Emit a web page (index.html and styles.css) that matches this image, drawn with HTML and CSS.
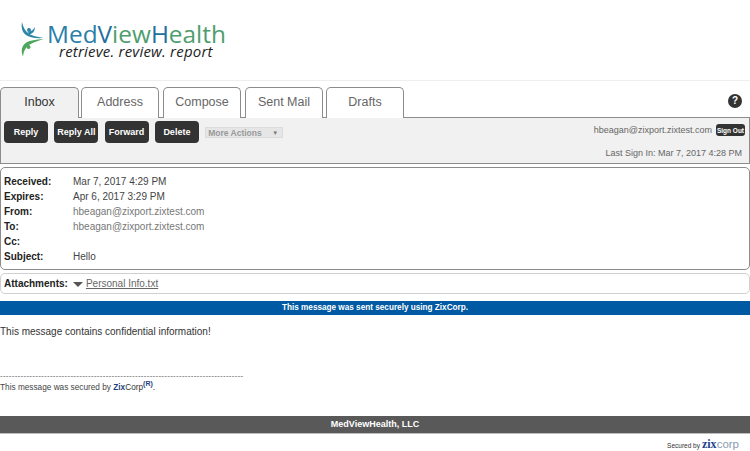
FILE: index.html
```html
<!DOCTYPE html>
<html lang="en">
<head>
<meta charset="utf-8">
<title>MedViewHealth</title>
<link rel="stylesheet" href="styles.css">
</head>
<body>
<header class="brand">
  <div class="logo">
    <svg class="logo-mark" width="26" height="36" viewBox="0 0 26 36" aria-hidden="true">
      <path d="M2 1C1 6 2 11 6 14C9 16.500 15 17.500 24 17C16 15.500 11 14.500 8 12C5 9.500 3 6 2 1Z" fill="#2b86a8"/>
      <circle cx="9" cy="9" r="2" fill="#2b86a8"/>
      <path d="M8 11C11 10.500 14 8.500 15 6C15 9.500 13 13 9 13.500Z" fill="#2b86a8"/>
      <path d="M24 18C15 18.500 8 19.500 4.500 23C1.500 26 1 31 3 35.500C3.500 30 5.500 26.500 9 24C12 22 17 20 24 18Z" fill="#4ea65c"/>
      <circle cx="8.500" cy="26" r="2" fill="#4ea65c"/>
    </svg>
    <div class="logo-text">
      <div class="logo-name"><span class="blue">Med</span><span class="deep">V</span><span class="green">iew</span><span class="deep">H</span><span class="green">ealth</span></div>
      <div class="logo-tag">retrieve. review. report</div>
    </div>
  </div>
</header>

<nav class="tabs">
  <a class="tab tab-active">Inbox</a>
  <a class="tab tab-address">Address</a>
  <a class="tab tab-compose">Compose</a>
  <a class="tab tab-sent">Sent Mail</a>
  <a class="tab tab-drafts">Drafts</a>
  <span class="help">?</span>
</nav>

<section class="toolbar">
  <div class="actions">
    <button class="btn">Reply</button>
    <button class="btn">Reply All</button>
    <button class="btn">Forward</button>
    <button class="btn">Delete</button>
    <div class="more"><span>More Actions</span><span class="more-arrow">▼</span></div>
  </div>
  <div class="account">
    <div class="account-user"><span>hbeagan@zixport.zixtest.com</span><button class="signout">Sign Out</button></div>
    <div class="account-last">Last Sign In: Mar 7, 2017 4:28 PM</div>
  </div>
</section>

<section class="details">
  <div class="row"><span class="label">Received:</span><span class="value">Mar 7, 2017 4:29 PM</span></div>
  <div class="row"><span class="label">Expires:</span><span class="value">Apr 6, 2017 3:29 PM</span></div>
  <div class="row"><span class="label">From:</span><span class="value muted">hbeagan@zixport.zixtest.com</span></div>
  <div class="row"><span class="label">To:</span><span class="value muted">hbeagan@zixport.zixtest.com</span></div>
  <div class="row"><span class="label">Cc:</span><span class="value"></span></div>
  <div class="row"><span class="label">Subject:</span><span class="value">Hello</span></div>
</section>

<section class="attachments">
  <span class="label-att">Attachments:</span>
  <span class="att-arrow"></span>
  <a class="att-link">Personal Info.txt</a>
</section>

<div class="secure-bar">This message was sent securely using ZixCorp.</div>

<main class="message">
  <p class="message-text">This message contains confidential information!</p>
  <div class="rule">-----------------------------------------------------------------------------------</div>
  <p class="secured-note">This message was secured by <b class="zix">Zix</b><span class="corp">Corp</span><sup class="reg">(R)</sup>.</p>
</main>

<footer class="foot">MedViewHealth, LLC</footer>
<div class="secured-by"><span class="sb-text">Secured by</span><span class="sb-zix">zix</span><span class="sb-corp">corp</span></div>
</body>
</html>
```

FILE: styles.css
```css
* { box-sizing: border-box; }
html, body { margin: 0; padding: 0; }
body {
  width: 750px;
  height: 451px;
  overflow: hidden;
  background: #fff;
  font-family: "Liberation Sans", Arial, sans-serif;
  color: #333;
}

/* Brand */
.brand {
  height: 81px;
  padding: 20px 0 0 20px;
  border-bottom: 1px solid #eeeeee;
}
.logo { display: flex; align-items: flex-start; }
.logo-mark { margin-top: 1px; flex: none; }
.logo-text { margin-left: 1px; padding-top: 2px; }
.logo-name {
  font-family: "Open Sans", sans-serif;
  font-size: 24.400px;
  line-height: 24px;
  white-space: nowrap;
}
.blue { color: #2a7fa8; }
.deep { color: #1f6f9f; }
.green { color: #4f9d6e; }
.logo-tag {
  margin: -2px 0 0 12px;
  font-family: "Open Sans", sans-serif;
  font-style: italic;
  font-size: 15px;
  line-height: 14px;
  color: #222;
  letter-spacing: 0.2px;
  white-space: nowrap;
}

/* Tabs */
.tabs {
  display: flex;
  align-items: flex-end;
  height: 37px;
  padding-top: 6px;
  position: relative;
  z-index: 1;
  margin-bottom: -1px;
}
.tab {
  height: 31px;
  width: 78px;
  flex: none;
  border: 1px solid #8c8c8c;
  border-bottom: 0;
  border-radius: 5px 5px 0 0;
  background: #fff;
  color: #666;
  font-size: 12.500px;
  line-height: 29px;
  text-align: center;
}
.tab-active {
  width: 79px;
  background: #f1f1f1;
  color: #333;
  margin-right: 2px;
}
.tab-address { margin-right: 4px; }
.tab-compose { margin-right: 4px; }
.tab-sent { margin-right: 3px; }
.help {
  width: 14px;
  height: 14px;
  margin: 0 8px 10px auto;
  border-radius: 50%;
  background: #333;
  color: #fff;
  font-size: 10px;
  font-weight: bold;
  line-height: 14px;
  text-align: center;
  align-self: flex-end;
}

/* Toolbar */
.toolbar {
  height: 47px;
  display: flex;
  justify-content: space-between;
  background: #f1f1f1;
  border: 1px solid #8c8c8c;
}
.actions {
  display: flex;
  align-items: flex-start;
  padding: 3px 0 0 3px;
}
.btn {
  width: 44px;
  height: 22px;
  margin-right: 6.300px;
  padding: 0;
  border: 0;
  border-radius: 4px;
  background: #333;
  color: #fff;
  font-family: inherit;
  font-size: 9px;
  font-weight: bold;
  white-space: nowrap;
}
.more {
  display: flex;
  justify-content: space-between;
  align-items: center;
  width: 78px;
  height: 11px;
  margin-top: 6px;
  padding: 0 4px 0 2px;
  background: #e6e6e6;
  border: 1px solid #dcdcdc;
  color: #999;
  font-size: 8.500px;
  font-weight: bold;
}
.more-arrow { font-size: 6px; color: #777; }
.account {
  text-align: right;
  font-size: 9px;
  color: #666;
}
.account-user {
  display: flex;
  align-items: center;
  justify-content: flex-end;
  gap: 4px;
  height: 12px;
  margin: 6px 4px 0 0;
}
.signout {
  width: 29px;
  height: 12px;
  padding: 0;
  border: 0;
  border-radius: 3px;
  background: #333;
  color: #fff;
  font-family: inherit;
  font-size: 6.500px;
  font-weight: bold;
  white-space: nowrap;
}
.account-last { margin: 12px 7px 0 0; line-height: 11px; }

/* Details */
.details {
  height: 103px;
  margin-top: 3px;
  padding: 6px 3px 0;
  border: 1px solid #8c8c8c;
  border-radius: 5px;
  font-size: 10px;
}
.row { display: flex; height: 15px; line-height: 15px; }
.label { width: 69px; font-weight: bold; color: #222; }
.value { color: #444; }
.muted { color: #777; }

/* Attachments */
.attachments {
  display: flex;
  align-items: center;
  height: 21px;
  margin-top: 3px;
  padding-left: 3px;
  border: 1px solid #d0d0d0;
  border-radius: 5px;
  font-size: 10px;
}
.label-att { font-weight: bold; color: #222; }
.att-arrow {
  width: 0;
  height: 0;
  margin: 2px 3px 0 5px;
  border: 5px solid transparent;
  border-top: 5px solid #555;
  border-bottom: 0;
}
.att-link { color: #666; text-decoration: underline; }

/* Secure bar */
.secure-bar {
  height: 14px;
  margin-top: 7px;
  background: #0059a3;
  color: #fff;
  font-size: 8.200px;
  font-weight: bold;
  line-height: 14px;
  text-align: center;
}

/* Message */
.message { height: 101px; }
.message-text {
  margin: 0;
  padding-top: 10px;
  font-size: 10px;
  line-height: 14px;
  color: #333;
}
.rule {
  margin-top: 32px;
  font-size: 8px;
  line-height: 9px;
  letter-spacing: 0.27px;
  color: #555;
  white-space: nowrap;
}
.secured-note {
  margin: 2px 0 0;
  font-size: 8.250px;
  line-height: 12px;
  color: #444;
}
.zix { color: #1f3f7f; }
.corp { color: #333; }
.reg { font-size: 7px; font-weight: bold; line-height: 0; color: #1f3f7f; }

/* Footer */
.foot {
  height: 18px;
  background: #595959;
  border-bottom: 1px solid #bdbdbd;
  color: #fff;
  font-size: 9px;
  font-weight: bold;
  line-height: 17px;
  text-align: center;
}
.secured-by {
  display: flex;
  justify-content: flex-end;
  align-items: baseline;
  height: 15px;
  line-height: 12px;
  padding: 4px 11px 0 0;
}
.sb-text { font-size: 6.500px; color: #333; margin-right: 2px; }
.sb-zix {
  font-family: "Liberation Serif", serif;
  font-size: 12px;
  font-weight: bold;
  color: #1f3f8f;
}
.sb-corp { font-size: 11.500px; color: #8a9ab0; font-weight: normal; }
```
